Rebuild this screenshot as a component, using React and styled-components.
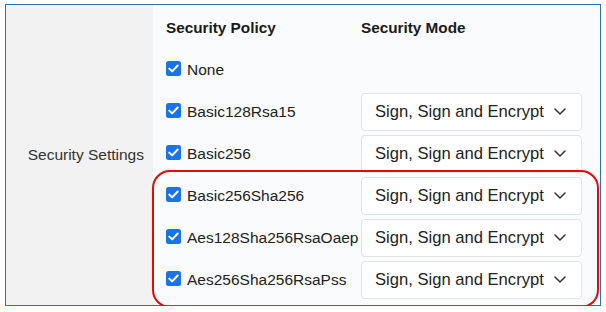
import React from 'react';
import styled, { createGlobalStyle } from 'styled-components';

const Global = createGlobalStyle`
  body {
    margin: 0;
    background: #ffffff;
    font-family: "Liberation Sans", Arial, sans-serif;
  }
`;

const Frame = styled.div`
  position: relative;
  margin: 4px 0 0 5px;
  width: 596px;
  height: 302px;
  box-sizing: border-box;
  border: 1.5px solid #2f6fa7;
  display: grid;
  grid-template-columns: 147px 1fr;
`;

const LabelCell = styled.div`
  background: #f2f2f2;
  display: flex;
  align-items: center;
  justify-content: flex-end;
  padding-right: 9px;
  font-size: 15.5px;
  color: #333;
`;

const Content = styled.div`
  background: #fafbfc;
  padding: 1.5px 0 0 13px;
  display: grid;
  grid-template-columns: 195px 221px;
  grid-auto-rows: 42px;
  align-items: center;
`;

const Head = styled.div`
  font-size: 15.3px;
  font-weight: bold;
  color: #1a1a1a;
`;

const Policy = styled.label`
  display: flex;
  align-items: center;
  gap: 6px;
  font-size: 15.5px;
  color: #222;
  white-space: nowrap;
`;

const Box = styled.span`
  width: 15px;
  height: 15px;
  border-radius: 2.5px;
  background: #1a73e8;
  display: flex;
  align-items: center;
  justify-content: center;
  flex-shrink: 0;
  margin-top: -3px;
`;

const Select = styled.div`
  height: 38px;
  box-sizing: border-box;
  border: 1px solid #dfe2e6;
  border-radius: 4px;
  background: #fff;
  display: flex;
  align-items: center;
  justify-content: space-between;
  padding: 0 15px 0 13px;
  font-size: 16.6px;
  color: #222;
`;

const Highlight = styled.div`
  position: absolute;
  left: 146px;
  top: 165px;
  width: 447px;
  height: 138px;
  box-sizing: border-box;
  border: 2.5px solid #e20a0a;
  border-radius: 18px;
  pointer-events: none;
`;

const Check = () => (
  <svg width="11" height="9" viewBox="0 0 11 9">
    <path d="M1.3 4.6 L4.2 7.4 L9.7 1.5" fill="none" stroke="#fff" strokeWidth="2" strokeLinecap="round" strokeLinejoin="round" />
  </svg>
);

const Chevron = () => (
  <svg width="12" height="7" viewBox="0 0 12 7">
    <path d="M1 1 L6 6 L11 1" fill="none" stroke="#333" strokeWidth="1.5" strokeLinecap="round" strokeLinejoin="round" />
  </svg>
);

const policies = [
  { name: 'None', mode: false },
  { name: 'Basic128Rsa15', mode: true },
  { name: 'Basic256', mode: true },
  { name: 'Basic256Sha256', mode: true },
  { name: 'Aes128Sha256RsaOaep', mode: true },
  { name: 'Aes256Sha256RsaPss', mode: true },
];

export default function App() {
  return (
    <>
      <Global />
      <Frame>
        <LabelCell>Security Settings</LabelCell>
        <Content>
          <Head>Security Policy</Head>
          <Head>Security Mode</Head>
          {policies.map((p) => (
            <React.Fragment key={p.name}>
              <Policy>
                <Box><Check /></Box>
                {p.name}
              </Policy>
              {p.mode ? (
                <Select>
                  Sign, Sign and Encrypt
                  <Chevron />
                </Select>
              ) : <div />}
            </React.Fragment>
          ))}
        </Content>
        <Highlight />
      </Frame>
    </>
  );
}
